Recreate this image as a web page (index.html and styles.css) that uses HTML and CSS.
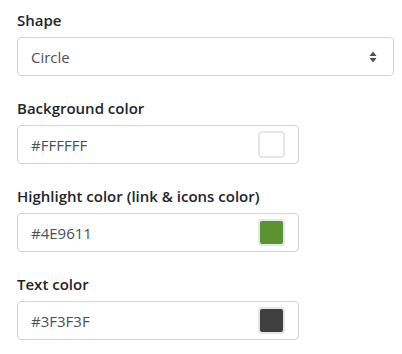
FILE: index.html
```html
<!DOCTYPE html>
<html lang="en">
<head>
    <meta charset="UTF-8">
    <meta name="viewport" content="width=device-width, initial-scale=1.0">
    <title>Widget settings</title>
    <link rel="stylesheet" href="styles.css">
</head>
<body>
    <div class="settings">
        <div class="form-group">
            <label for="shape">Shape</label>
            <div class="select-box">
                <span id="shape">Circle</span>
                <svg class="arrows" width="8" height="12" viewBox="0 0 8 12">
                    <path d="M4 0.5 L7.5 5 L0.5 5 Z" fill="#4a4f55"/>
                    <path d="M4 11.5 L7.5 7 L0.5 7 Z" fill="#4a4f55"/>
                </svg>
            </div>
        </div>

        <div class="form-group">
            <label for="bgColor">Background color</label>
            <div class="color-input">
                <span id="bgColor">#FFFFFF</span>
                <span class="swatch swatch-white"></span>
            </div>
        </div>

        <div class="form-group">
            <label for="hlColor">Highlight color (link &amp; icons color)</label>
            <div class="color-input">
                <span id="hlColor">#4E9611</span>
                <span class="swatch swatch-green"></span>
            </div>
        </div>

        <div class="form-group">
            <label for="txtColor">Text color</label>
            <div class="color-input">
                <span id="txtColor">#3F3F3F</span>
                <span class="swatch swatch-dark"></span>
            </div>
        </div>
    </div>
</body>
</html>
```

FILE: styles.css
```css
* {
    margin: 0;
    padding: 0;
    box-sizing: border-box;
}
body {
    background-color: #fff;
    color: #212529;
    font-family: "Open Sans", Lato, sans-serif;
    font-size: 15px;
    padding: 8px 8px 0 17px;
}
.form-group {
    margin-bottom: 20px;
}
label {
    display: block;
    font-weight: 600;
    line-height: 24px;
    margin-bottom: 5px;
}
.select-box, .color-input {
    display: flex;
    align-items: center;
    justify-content: space-between;
    height: 39px;
    border: 1px solid #ced4da;
    border-radius: 4px;
    padding: 0 13px 0 13px;
    color: #495057;
}
.select-box {
    width: 377px;
    padding-right: 16px;
}
.color-input {
    width: 282px;
}
.swatch {
    width: 27px;
    height: 27px;
    border-radius: 4px;
    border: 2px solid #e4e7ea;
}
.swatch-white {
    background: #fff;
}
.swatch-green {
    background: #5b9330;
}
.swatch-dark {
    background: #3f3f3f;
}
```
